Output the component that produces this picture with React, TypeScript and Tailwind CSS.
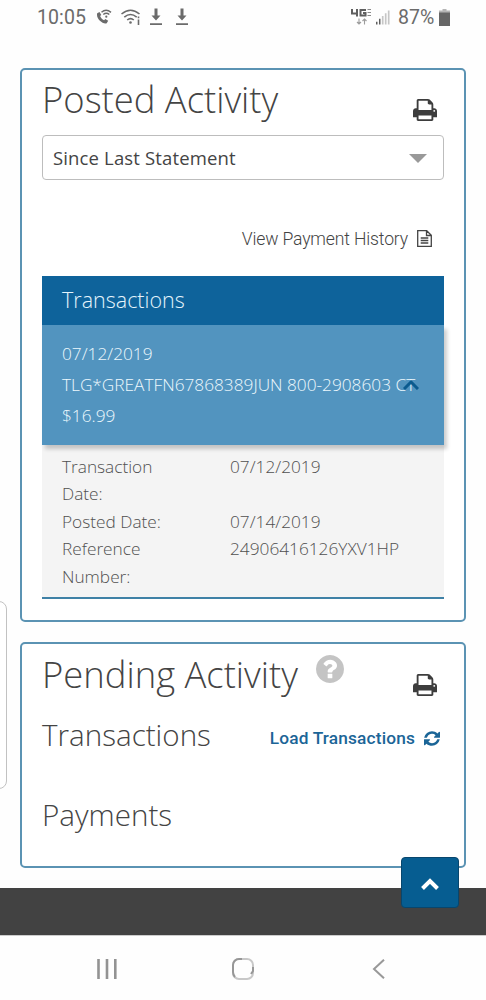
import React from 'react';

function PrintIcon() {
  return (
    <svg viewBox="0 128 1664 1536" preserveAspectRatio="none" className="w-[24px] h-[22px] mt-[22px] mr-[7px] shrink-0" fill="#3d3d3d">
      <path d="M384 1536h896v-256h-896v256zM384 896h896v-384h-160q-40 0-68-28t-28-68v-160h-640v640zM1536 960q0-26-19-45t-45-19-45 19-19 45 19 45 45 19 45-19 19-45zM1664 960v416q0 13-9.5 22.5t-22.5 9.5h-224v160q0 40-28 68t-68 28h-960q-40 0-68-28t-28-68v-160h-224q-13 0-22.5-9.5t-9.5-22.5v-416q0-79 56.5-135.5t135.5-56.5h64v-544q0-40 28-68t68-28h672q40 0 88 20t76 48l152 152q28 28 48 76t20 88v256h64q79 0 135.5 56.5t56.5 135.5z" />
    </svg>
  );
}

function HelpIcon() {
  return (
    <svg viewBox="0 128 1536 1536" className="w-[28px] h-[28px] ml-[18px] -mt-[9px]" fill="#c4c4c4">
      <path d="M896 1376v-192q0-14-9-23t-23-9h-192q-14 0-23 9t-9 23v192q0 14 9 23t23 9h192q14 0 23-9t9-23zM1152 704q0-88-55.5-163t-138.5-116-170-41q-243 0-371 213-15 24 8 42l132 100q7 6 19 6 16 0 25-12 53-68 86-92 34-24 86-24 48 0 85.5 26t37.5 59q0 38-20 61t-68 45q-63 28-115.5 86.5t-52.5 125.5v36q0 14 9 23t23 9h192q14 0 23-9t9-23q0-19 21.5-49.5t54.5-49.5q32-18 49-28.5t46-35 44.5-48 28-60.5 12.5-81zM1536 896q0 209-103 385.5t-279.5 279.5-385.5 103-385.5-103-279.5-279.5-103-385.5 103-385.5 279.5-279.5 385.5-103 385.5 103 279.5 279.5 103 385.5z" />
    </svg>
  );
}

function RefreshIcon() {
  return (
    <svg viewBox="0 128 1536 1408" className="w-[16px] h-[15px]" fill="currentColor">
      <path d="M1511 928q0 5-1 7-64 268-268 434.5t-478 166.5q-146 0-282.5-55t-243.5-157l-129 129q-19 19-45 19t-45-19-19-45v-448q0-26 19-45t45-19h448q26 0 45 19t19 45-19 45l-137 137q71 66 161 102t187 36q134 0 250-65t186-179q11-17 53-117 8-23 30-23h192q13 0 22.5 9.5t9.5 22.5zM1536 256v448q0 26-19 45t-45 19h-448q-26 0-45-19t-19-45 19-45l138-138q-148-137-349-137-134 0-250 65t-186 179q-11 17-53 117-8 23-30 23h-199q-13 0-22.5-9.5t-9.5-22.5v-7q65-268 270-434.5t480-166.5q146 0 284 55.5t245 156.5l130-129q19-19 45-19t45 19 19 45z" />
    </svg>
  );
}

function DownloadIcon() {
  return (
    <svg viewBox="0 0 12 18" className="w-[12px] h-[18px]" fill="#6b6b6b">
      <path d="M4.500.500h3v7h3L6 12.500 1.500 7.500h3zM0 15.300h12v1.600H0z" />
    </svg>
  );
}

function StatusBar() {
  return (
    <div className="h-[34px] pl-[37px] pr-[35px] flex items-center justify-between font-['Roboto'] text-[#6b6b6b]">
      <div className="flex items-center">
        <span className="text-[19.5px] tracking-[0.1px] w-[50px] pt-[1px] whitespace-nowrap">10:05</span>
        <svg viewBox="0 0 16 16" className="w-[16px] h-[16px] ml-[9px]" fill="none" stroke="#6b6b6b">
          <path d="M1.200 4.300 3.500 3l1.800 3-1.200 1.100c.7 2 2 3.300 4 4.100l1.200-1.300 2.900 1.900-1.500 2.400C7.300 15.800-.4 10 1.200 4.300z" fill="#6b6b6b" stroke="none" />
          <path d="M5.500 3.300q4.500-4 9.500 0M7.300 5.500q3-2.500 6 0" strokeWidth="1.500" />
          <circle cx="10.300" cy="7.700" r="1.100" fill="#6b6b6b" stroke="none" />
        </svg>
        <svg viewBox="0 0 20 16" className="w-[20px] h-[16px] ml-[9px]" fill="none" stroke="#6b6b6b" strokeWidth="1.600">
          <path d="M.5 5q9-7.500 18 0M3.300 8.200q6.200-5.400 12.400 0M6.200 11q3.300-2.800 6.600 0" />
          <circle cx="9.500" cy="13.500" r="1.300" fill="#6b6b6b" stroke="none" />
          <path d="M17.500 7.500v1.700M17.500 10.500v5.500" />
        </svg>
        <span className="ml-[9px]"><DownloadIcon /></span>
        <span className="ml-[14px]"><DownloadIcon /></span>
      </div>
      <div className="flex items-center">
        <svg viewBox="0 0 20 18" className="w-[20px] h-[18px]" fill="none" stroke="#5f5f5f">
          <path d="M1 1v4.500h6M6 1v7.500M15 2H9.500v5.500h5V5H12" strokeWidth="2" />
          <path d="M16.500 1.500h3.500M16.500 4.500h3.500M16.500 7.500h3.500" strokeWidth="1.200" stroke="#8a8a8a" />
          <path d="M8 10.500v5.500M6 14l2 2 2-2M13.500 16.500V11M11.500 13l2-2 2 2" strokeWidth="1.100" stroke="#9c9c9c" />
        </svg>
        <svg viewBox="0 0 15 16" className="w-[14px] h-[16px] ml-[5px]">
          <path d="M0 13h1.600v3H0zM3.200 10h1.600v6H3.200z" fill="#5f5f5f" />
          <path d="M6.300 7h1.800v9H6.300zM9.500 4h1.800v12H9.500zM12.700 1h1.800v15h-1.800z" fill="#c6c6c6" />
        </svg>
        <span className="text-[19.5px] ml-[8px] w-[37px] pt-[1px] whitespace-nowrap">87%</span>
        <svg viewBox="0 0 11 17" className="w-[11px] h-[17px] ml-[4px] mr-[1px]" fill="#666">
          <path d="M3.500 0h4v1.500H11V4H0V1.500h3.500z" fill="#b5b5b5" />
          <path d="M0 3.500h11V17H0z" />
        </svg>
      </div>
    </div>
  );
}

function PostedActivity() {
  return (
    <section className="mx-[20px] mt-[34px] h-[554px] px-5 border-2 border-[#5b93b3] rounded-[5px] bg-white">
      <div className="h-[58px] flex items-center justify-between">
        <h1 className="text-[36.4px] font-light whitespace-nowrap pt-px">Posted Activity</h1>
        <PrintIcon />
      </div>

      <button className="mt-[7px] w-full h-[45px] pl-[10px] pr-[16px] flex items-center justify-between border border-[#bdbdbd] rounded-[4px] text-[18.5px] tracking-[0.15px]">
        <span className="whitespace-nowrap">Since Last Statement</span>
        <svg viewBox="0 0 18 9" className="w-[18px] h-[9px] mt-px" fill="#999">
          <path d="M0 0h18L9 9z" />
        </svg>
      </button>

      <div className="mt-[45px] h-[27px] pr-[12px] flex items-center justify-end font-['Roboto'] font-light text-[17.6px] tracking-[-0.15px]">
        <span className="whitespace-nowrap pt-[2px]">View Payment History</span>
        <svg viewBox="0 0 15 17" className="w-[15px] h-[17px] ml-[9px]" fill="none" stroke="#444" strokeWidth="1.300">
          <path d="M.7.700h9l4.600 4.600v11H.7zM9.500.700v4.800h4.800M3.700 8h7.600M3.700 10.500h7.600M3.700 13h7.600" />
        </svg>
      </div>

      <div className="mt-6">
        <div className="h-[49px] pl-5 flex items-center bg-[#0e639b] text-[#e4f4fc] text-[21.5px] font-light">Transactions</div>
        <div className="relative h-[120px] pl-5 pt-[13px] bg-[#5294bf] text-[#edf8fd] text-[17.25px] leading-[31px] font-light whitespace-nowrap shadow-[3px_4px_4px_rgba(0,0,0,0.2)]">
          <div>07/12/2019</div>
          <div>TLG*GREATFN67868389JUN 800-2908603 CT</div>
          <div>$16.99</div>
          <svg viewBox="0 0 16 10" className="absolute right-[25px] top-[55px] w-[16px] h-[10px]" fill="none" stroke="#0b5b8f" strokeWidth="3">
            <path d="M1 9l7-7 7 7" />
          </svg>
        </div>
        <dl className="h-[154px] pl-5 pt-[7.5px] grid grid-cols-[168px_1fr] content-start bg-[#f4f4f4] border-b-2 border-[#3f81a6] text-[17.25px] leading-[27.5px] font-light text-[#505050]">
          <dt>Transaction<br />Date:</dt>
          <dd>07/12/2019</dd>
          <dt>Posted Date:</dt>
          <dd>07/14/2019</dd>
          <dt>Reference<br />Number:</dt>
          <dd>24906416126YXV1HP</dd>
        </dl>
      </div>
    </section>
  );
}

function PendingActivity() {
  return (
    <section className="mx-[20px] mt-5 h-[226px] px-5 border-2 border-[#5b93b3] rounded-[5px] bg-white">
      <div className="h-[59px] flex items-center justify-between">
        <div className="flex items-center">
          <h1 className="text-[36.4px] font-light whitespace-nowrap pt-px">Pending Activity</h1>
          <HelpIcon />
        </div>
        <PrintIcon />
      </div>
      <div className="h-[61px] pr-[4px] flex items-center justify-between">
        <h2 className="text-[29.6px] font-light pt-[3px]">Transactions</h2>
        <a className="mt-[10px] flex items-center gap-[9px] font-['Roboto'] font-medium text-[17.3px] tracking-[0.16px] text-[#1b6597] whitespace-nowrap">
          Load Transactions
          <RefreshIcon />
        </a>
      </div>
      <div className="mt-5 h-[60px] flex items-center">
        <h2 className="text-[29.6px] font-light pt-[2px]">Payments</h2>
      </div>
    </section>
  );
}

export default function App() {
  return (
    <div className="relative w-[486px] h-[1000px] flex flex-col overflow-hidden bg-[#fefefe] font-['Open_Sans',sans-serif] text-[#444]">
      <StatusBar />
      <PostedActivity />
      <PendingActivity />
      <footer className="mt-5 h-[47px] bg-[#424242]" />
      <nav className="flex-1 border-t border-[#ccc] bg-[#fefefe] pl-[97px] pr-[101px] pt-[2px] flex items-center justify-between">
        <svg viewBox="0 0 20 20" className="w-[20px] h-[20px]" fill="none" stroke="#939393" strokeWidth="2.600">
          <path d="M1.500 0v20M10 0v20M18.300 0v20" />
        </svg>
        <svg viewBox="0 0 22 22" className="w-[22px] h-[22px] -ml-[4px]" fill="none" strokeWidth="2">
          <rect x="1" y="1" width="20" height="20" rx="6" stroke="#c8c8c8" />
          <path d="M10 1H7a6 6 0 0 0-6 6v7q0 3 2 5M21 9v4l-2 3" stroke="#979797" />
        </svg>
        <svg viewBox="0 0 13 20" className="w-[13px] h-[20px]" fill="none" stroke="#999" strokeWidth="2">
          <path d="M12 .700 2 10l10 9.300" />
        </svg>
      </nav>

      <div className="absolute -left-[10px] top-[601px] w-[17px] h-[188px] border border-[#c2c2c2] rounded-[8px] bg-white" />
      <button className="absolute left-[401px] top-[857px] w-[58px] h-[51px] flex items-center justify-center rounded-[4px] border border-[#08466d] bg-[#065d91]">
        <svg viewBox="0 0 18 12" className="w-[18px] h-[12px] mt-[3px]" fill="none" stroke="#fff" strokeWidth="4">
          <path d="M1.500 10.500 9 3l7.500 7.500" />
        </svg>
      </button>
    </div>
  );
}
